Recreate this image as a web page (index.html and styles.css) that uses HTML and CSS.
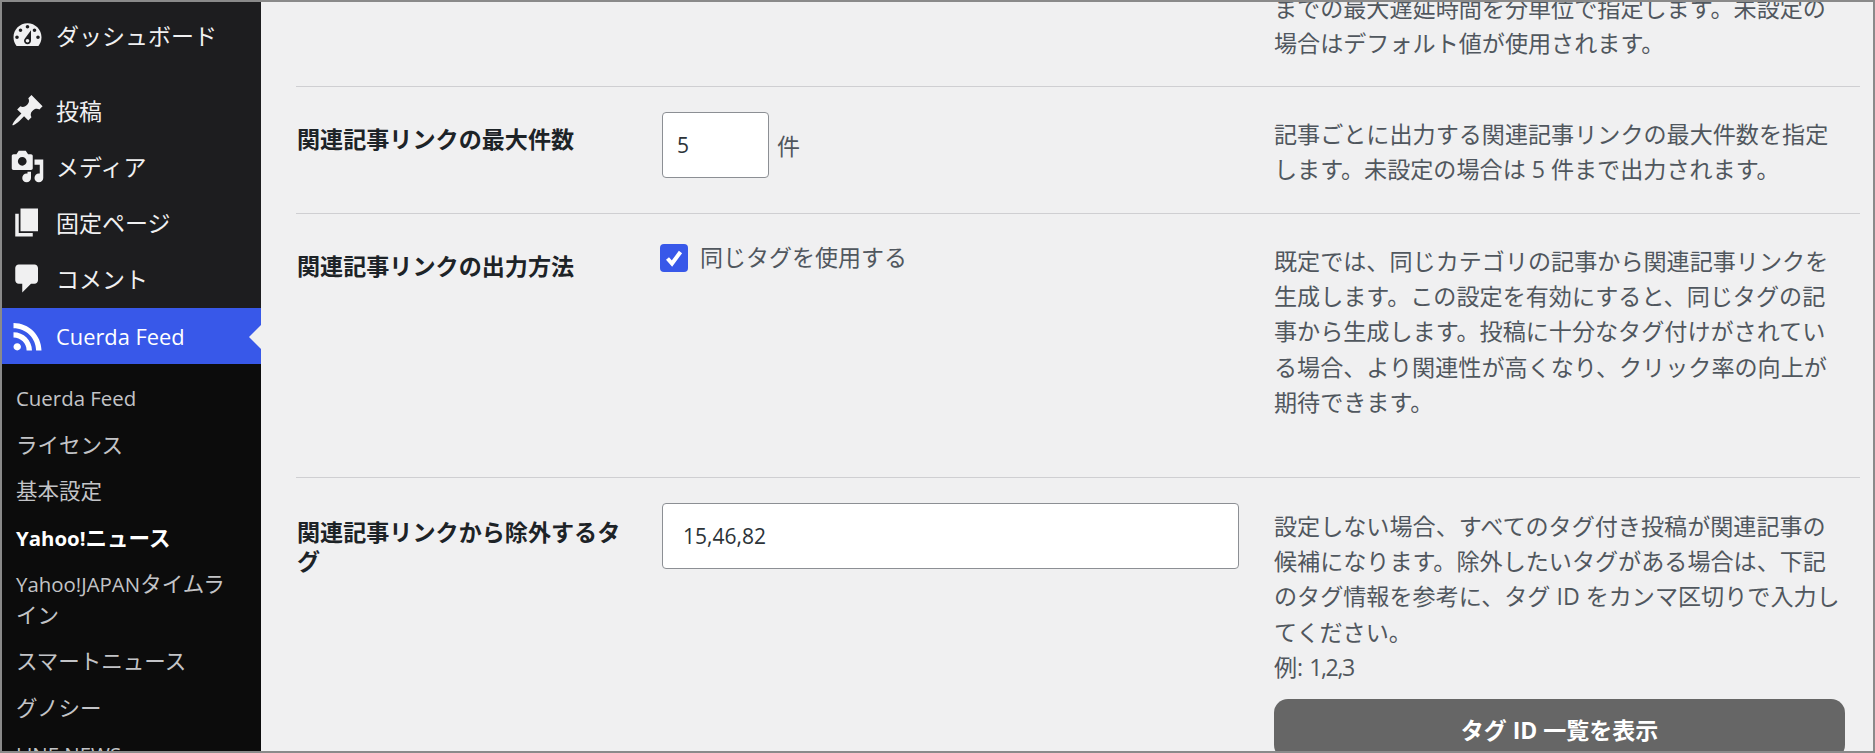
FILE: index.html
```html
<!DOCTYPE html>
<html lang="ja">
<head>
<meta charset="utf-8">
<title>Cuerda Feed</title>
<link rel="stylesheet" href="styles.css">
</head>
<body>
<div class="frame">
  <nav class="sidebar">
    <ul class="menu">
      <li class="item item-first"><svg class="icon" viewBox="0 0 20 20"><path d="M3.76 16h12.48c1.1-1.37 1.76-3.11 1.76-5 0-4.42-3.58-8-8-8s-8 3.58-8 8c0 1.89.66 3.63 1.76 5zM10 4c.55 0 1 .45 1 1s-.45 1-1 1-1-.45-1-1 .45-1 1-1zM6 6c.55 0 1 .45 1 1s-.45 1-1 1-1-.45-1-1 .45-1 1-1zm8 0c.55 0 1 .45 1 1s-.45 1-1 1-1-.45-1-1 .45-1 1-1zm-5.37 5.55L12 7v6c0 1.1-.9 2-2 2s-2-.9-2-2c0-.57.24-1.08.63-1.45zM4 10c.55 0 1 .45 1 1s-.45 1-1 1-1-.45-1-1 .45-1 1-1zm12 0c.55 0 1 .45 1 1s-.45 1-1 1-1-.45-1-1 .45-1 1-1zm-5 3c0-.55-.45-1-1-1s-1 .45-1 1 .45 1 1 1 1-.45 1-1z"/></svg><span>ダッシュボード</span></li>
      <li class="item"><svg class="icon" viewBox="0 0 20 20"><path d="M10.44 3.02l1.82-1.82 6.36 6.35-1.83 1.82c-1.05-.68-2.48-.57-3.41.36l-.75.75c-.92.93-1.04 2.35-.35 3.41l-1.83 1.82-2.41-2.41-2.8 2.79c-.42.42-3.38 2.71-3.8 2.29s1.86-3.39 2.28-3.81l2.79-2.79L4.1 9.36l1.83-1.82c1.05.69 2.48.57 3.4-.36l.75-.75c.93-.92 1.05-2.35.36-3.41z"/></svg><span>投稿</span></li>
      <li class="item"><svg class="icon" viewBox="0 0 20 20"><path d="M13 11V4c0-.55-.45-1-1-1h-1.67L9 1H5L3.67 3H2c-.55 0-1 .45-1 1v7c0 .55.45 1 1 1h10c.55 0 1-.45 1-1zM7 4.5c1.38 0 2.5 1.12 2.5 2.5S8.38 9.5 7 9.5 4.5 8.38 4.5 7 5.62 4.5 7 4.5zM14 6h5v10.5c0 1.38-1.12 2.5-2.5 2.5S14 17.88 14 16.5s1.12-2.5 2.5-2.5c.17 0 .34.02.5.05V9h-3V6zm-4 8.05V13h2v3.5c0 1.38-1.12 2.5-2.5 2.5S7 17.88 7 16.5 8.12 14 9.5 14c.17 0 .34.02.5.05z"/></svg><span>メディア</span></li>
      <li class="item"><svg class="icon" viewBox="0 0 20 20"><path d="M6 15V2h10v13H6zm-1 1h8v2H3V5h2v11z"/></svg><span>固定ページ</span></li>
      <li class="item item-last"><svg class="icon" viewBox="0 0 20 20"><path d="M5 2h9c1.1 0 2 .9 2 2v7c0 1.1-.9 2-2 2h-2l-5 5v-5H5c-1.1 0-2-.9-2-2V4c0-1.1.9-2 2-2z"/></svg><span>コメント</span></li>
      <li class="item item-active"><svg class="icon" viewBox="0 0 20 20"><path d="M14.92 18H18C18 9.32 10.82 2.25 2 2.25v3.02c7.12 0 12.92 5.71 12.92 12.73zm-5.44 0h3.08C12.56 12.27 7.82 7.6 2 7.6v3.02c2 0 3.87.77 5.29 2.16C8.7 14.17 9.48 16.03 9.48 18zm-5.35-.02c1.17 0 2.13-.93 2.13-2.09 0-1.15-.96-2.09-2.13-2.09-1.18 0-2.13.94-2.13 2.09 0 1.16.95 2.09 2.13 2.09z"/></svg><span class="latin">Cuerda Feed</span></li>
    </ul>
    <ul class="submenu">
      <li><span class="latin">Cuerda Feed</span></li>
      <li>ライセンス</li>
      <li>基本設定</li>
      <li class="current"><span class="latin">Yahoo!</span>ニュース</li>
      <li><span class="latin">Yahoo!JAPAN</span>タイムライン</li>
      <li>スマートニュース</li>
      <li>グノシー</li>
      <li><span class="latin">LINE NEWS</span></li>
    </ul>
  </nav>
  <main class="main">
    <section class="row row-top">
      <div class="label"></div>
      <div class="control"></div>
      <p class="desc">までの最大遅延時間を分単位で指定します。未設定の場合はデフォルト値が使用されます。</p>
    </section>
    <section class="row row-second">
      <div class="label">関連記事リンクの最大件数</div>
      <div class="control control-input">
        <input class="input input-small" type="text" value="5" readonly>
        <span class="unit">件</span>
      </div>
      <p class="desc">記事ごとに出力する関連記事リンクの最大件数を指定します。未設定の場合は 5 件まで出力されます。</p>
    </section>
    <section class="row row-tall">
      <div class="label">関連記事リンクの出力方法</div>
      <div class="control control-check">
        <span class="check"><svg viewBox="0 0 28 28"><path d="M7.5 14.5l4.5 5 8.5-11.5" fill="none" stroke="#fff" stroke-width="4"/></svg></span>
        <span class="check-text">同じタグを使用する</span>
      </div>
      <p class="desc">既定では、同じカテゴリの記事から関連記事リンクを生成します。この設定を有効にすると、同じタグの記事から生成します。投稿に十分なタグ付けがされている場合、より関連性が高くなり、クリック率の向上が期待できます。</p>
    </section>
    <section class="row row-last">
      <div class="label">関連記事リンクから除外するタグ</div>
      <div class="control control-input">
        <input class="input input-wide" type="text" value="15,46,82" readonly>
      </div>
      <div class="desc-group">
        <p class="desc">設定しない場合、すべてのタグ付き投稿が関連記事の候補になります。除外したいタグがある場合は、下記のタグ情報を参考に、タグ ID をカンマ区切りで入力してください。<br>例: <span class="latin-tight">1,2,3</span></p>
        <button class="button" type="button">タグ ID 一覧を表示</button>
      </div>
    </section>
  </main>
</div>
</body>
</html>
```
FILE: styles.css
```css
* { box-sizing: border-box; }
html, body { margin: 0; height: 100%; overflow: hidden; }
body { font-family: "Open Sans", "Noto Sans CJK JP", sans-serif; background: #f0f0f1; color: #1d2327; }
.frame { display: flex; height: 753px; border: 2px solid #8a8a8a; overflow: hidden; background: #f0f0f1; }
.sidebar { flex: 0 0 259px; background: #1d1d1f; color: #f0f0f1; overflow: hidden; }
.menu, .submenu { list-style: none; margin: 0; padding: 0; }
.menu { padding-top: 5px; }
.latin { font-size: 0.95em; }
.latin-tight { letter-spacing: -0.06em; }
.item { position: relative; display: flex; align-items: center; gap: 11px; height: 56px; padding-left: 8px; font-size: 23px; }
.item-first { margin-bottom: 19px; }
.item-last { margin-bottom: 2px; }
.icon { flex: 0 0 35px; width: 35px; height: 35px; fill: #f0f0f1; }
.item-active { background: #3858e9; color: #fff; }
.item-active .icon { fill: #fff; }
.item-active::after { content: ""; position: absolute; right: 0; top: 17px; border: 12px solid transparent; border-left-width: 0; border-right-color: #f0f0f1; }
.submenu { background: #0c0c0c; padding-top: 11px; height: 100%; }
.submenu li { padding: 8px 30px 8px 14px; font-size: 21.5px; line-height: 30.5px; color: #c3c4c7; }
.submenu .current { color: #fff; font-weight: 700; }
.main { flex: 1; min-width: 0; padding: 0 13px 0 35px; overflow: hidden; }
.row { display: grid; grid-template-columns: 365px 613px 571px; border-bottom: 1px solid #cfcfd2; padding: 30px 0 24px; }
.row-top { margin-top: -41px; }
.row-second { padding-bottom: 25px; }
.row-tall { padding-bottom: 56px; }
.label { padding: 7px 25px 0 1px; font-size: 23.1px; line-height: 30px; font-weight: 700; }
.row-last .label { padding-top: 10px; line-height: 29px; }
.control { font-size: 23px; color: #50575e; }
.control-input { display: flex; align-items: center; gap: 8px; margin-top: -5px; align-self: start; }
.control-check { display: flex; align-items: flex-start; gap: 12px; line-height: 28px; margin-left: -1px; }
.check-text { margin-top: -1px; }
.input { height: 66px; margin-left: 1px; border: 1px solid #8c8f94; border-radius: 4px; background: #fff; font: inherit; font-size: 21px; color: #2c3338; outline: none; }
.input-small { width: 107px; padding: 2px 14px; }
.input-wide { width: 577px; padding: 2px 20px; }
.check { flex: 0 0 28px; width: 28px; height: 28px; background: #3858e9; border-radius: 4px; }
.check svg { display: block; width: 28px; height: 28px; }
.desc { margin: 0; font-size: 23.1px; line-height: 35.4px; color: #50575e; }
.desc-group { display: flex; flex-direction: column; padding-top: 1px; }
.button { display: block; width: 100%; height: 60px; margin-top: 13px; border: 0; border-radius: 14px; background: #666; color: #fff; font: inherit; font-size: 23px; font-weight: 700; }
```
